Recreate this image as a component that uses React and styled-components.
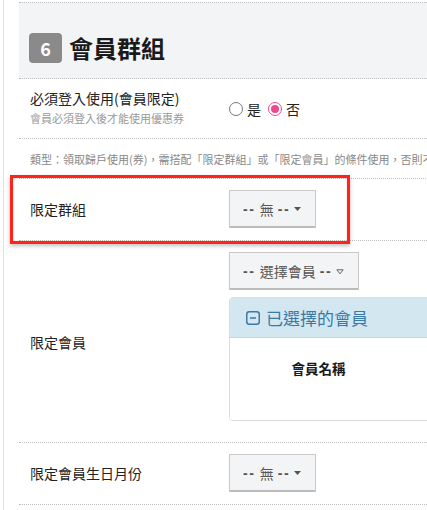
import React from 'react'
import styled, { createGlobalStyle } from 'styled-components'

const GlobalStyle = createGlobalStyle`
html, body {
    margin: 0;
    padding: 0;
    background: #fff;
}
body {
    font-family: "Noto Sans CJK TC", "Noto Sans", sans-serif;
    color: #333;
    overflow: hidden;
}
`

const Page = styled.div`
position: relative;
width: 427px;
height: 510px;
padding-left: 3px;
overflow: hidden;
box-sizing: border-box;
`

const Frame = styled.div`
border-left: 1px solid #e3e3e3;
padding: 2px 0 0 15px;
height: 100%;
box-sizing: border-box;
`

const Header = styled.div`
display: flex;
align-items: center;
gap: 7px;
background: #f3f4f6;
border-top: 1px dotted #bdbdbd;
border-bottom: 1px dotted #bdbdbd;
padding: 30px 10px 15px 10px;
width: 600px;
`

const Badge = styled.span`
display: flex;
align-items: center;
justify-content: center;
width: 33px;
height: 30px;
border-radius: 4px;
background: #8a8a8a;
color: #fff;
font-size: 18px;
font-weight: 700;
`

const Title = styled.h2`
margin: 0;
font-size: 24px;
line-height: 30px;
font-weight: 700;
color: #1a1a1a;
`

const Row = styled.div`
display: grid;
grid-template-columns: 200px 1fr;
align-items: center;
width: 600px;
border-bottom: 1px dotted #bdbdbd;
padding: ${props => props.$pad || '11px 0 12px 0'};
`

const Label = styled.div`
padding-left: 11px;
font-size: 14px;
line-height: 20px;
color: #222;
`

const Hint = styled.div`
font-size: 11px;
line-height: 16px;
color: #999;
margin-top: 2px;
`

const Value = styled.div`
padding-left: 10px;
display: flex;
flex-direction: column;
align-items: flex-start;
`

const Note = styled.div`
width: 600px;
padding: 0 0 0 11px;
height: 39px;
display: flex;
align-items: center;
font-size: 11px;
color: #888;
white-space: nowrap;
border-bottom: 1px dotted #bdbdbd;
`

const RadioGroup = styled.div`
display: flex;
align-items: center;
font-size: 14px;
color: #222;
padding-top: 4px;
`

const RadioDot = styled.span`
display: inline-flex;
align-items: center;
justify-content: center;
width: 12px;
height: 12px;
border-radius: 50%;
border: 1px solid ${props => props.$on ? '#ec4a8e' : '#777'};
margin: 0 4px 0 ${props => props.$first ? '0' : '7px'};
box-sizing: content-box;

&::after {
    content: '';
    width: 8px;
    height: 8px;
    border-radius: 50%;
    background: ${props => props.$on ? '#ec4a8e' : 'transparent'};
}
`

const Select = styled.div`
display: flex;
align-items: center;
height: 35px;
padding: 0 14px 0 13px;
background: #f3f4f6;
border: 1px solid #c9c9c9;
border-bottom: 2px solid #bcbcbc;
border-radius: 1px;
font-size: 14px;
color: #555;
white-space: nowrap;
`

const Dash = styled.span`
font-family: "Liberation Sans", Arial, sans-serif;
font-weight: 700;
letter-spacing: 1.5px;
margin: ${props => props.$end ? '0 3.5px 0 4px' : '0 4.5px 0 0'};
`

const Panel = styled.div`
margin-top: 7px;
margin-bottom: 10px;
width: 300px;
border: 1px solid #d8dde0;
border-radius: 4px;
overflow: hidden;
`

const PanelHead = styled.div`
display: flex;
align-items: center;
gap: 6px;
height: 39px;
padding-left: 16px;
background: #d3e7f1;
border-bottom: 1px solid #bfdbe8;
color: #3a7aa8;
font-size: 17px;
`

const PanelBody = styled.div`
height: 82px;
background: #fff;
`

const NameCol = styled.div`
width: 177px;
padding-top: 20px;
text-align: center;
font-size: 13.5px;
line-height: 20px;
font-weight: 700;
color: #1a1a1a;
`

const Mark = styled.div`
position: absolute;
left: 10px;
top: 175px;
width: 340px;
height: 69px;
box-sizing: border-box;
border: 3px solid #ff2417;
box-shadow: 0 2px 4px rgba(0, 0, 0, 0.25), inset 0 0 1px rgba(255, 60, 40, 0.8);
pointer-events: none;
`

const Caret = () => (
    <svg width="7" height="4" viewBox="0 0 7 4">
        <path d="M0 0 L7 0 L3.5 4 Z" fill="#555" />
    </svg>
)

const Chevron = () => (
    <svg width="8" height="6" viewBox="0 0 8 6" style={{ marginTop: 3 }}>
        <path d="M0.8 0.8 L7.2 0.8 L4 4.8 Z" fill="none" stroke="#666" strokeWidth="1" strokeLinejoin="round" />
    </svg>
)

const MinusBox = () => (
    <svg width="14" height="14" viewBox="0 0 14 14">
        <rect x="0.75" y="0.75" width="12.5" height="12.5" rx="2.5" fill="none" stroke="#3a7aa8" strokeWidth="1.5" />
        <path d="M4 7 H10" stroke="#3a7aa8" strokeWidth="1.5" />
    </svg>
)

const Dropdown = ({ text, outline }) => (
    <Select>
        <Dash>--</Dash>
        {text}
        <Dash $end>--</Dash>
        {outline ? <Chevron /> : <Caret />}
    </Select>
)

const App = () => {
    return (
        <Page>
            <GlobalStyle />
            <Frame>
                <Header>
                    <Badge>6</Badge>
                    <Title>會員群組</Title>
                </Header>

                <Row $pad="9px 0 12px 0">
                    <Label>
                        必須登入使用(會員限定)
                        <Hint>會員必須登入後才能使用優惠券</Hint>
                    </Label>
                    <Value>
                        <RadioGroup>
                            <RadioDot $first />是
                            <RadioDot $on />否
                        </RadioGroup>
                    </Value>
                </Row>

                <Note>類型：領取歸戶使用(券)，需搭配「限定群組」或「限定會員」的條件使用，否則不可使用</Note>

                <Row>
                    <Label>限定群組</Label>
                    <Value>
                        <Dropdown text="無" />
                    </Value>
                </Row>

                <Row $pad="11px 0 11px 0">
                    <Label>限定會員</Label>
                    <Value>
                        <Dropdown text="選擇會員" outline />
                        <Panel>
                            <PanelHead><MinusBox />已選擇的會員</PanelHead>
                            <PanelBody>
                                <NameCol>會員名稱</NameCol>
                            </PanelBody>
                        </Panel>
                    </Value>
                </Row>

                <Row>
                    <Label>限定會員生日月份</Label>
                    <Value>
                        <Dropdown text="無" />
                    </Value>
                </Row>
            </Frame>
            <Mark />
        </Page>
    )
}

export default App
